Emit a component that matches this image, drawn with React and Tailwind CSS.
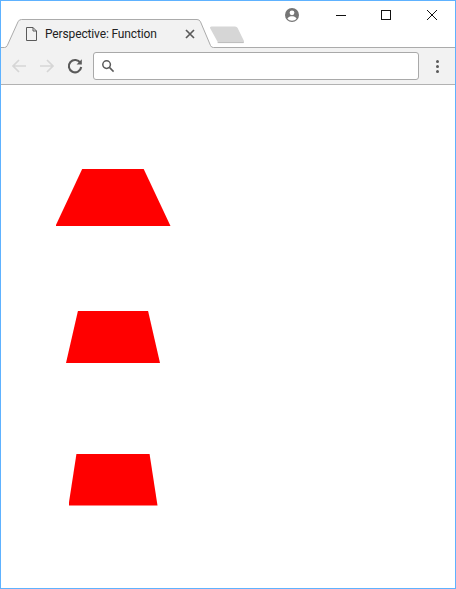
import React from "react";

const TAB_EDGE = "M1 47.5H4.5Q6.5 47.5 7.3 45.5L18 21.8Q19 19.5 21.5 19.5H197Q199.5 19.5 200.5 21.8L210.5 45.5Q211.3 47.5 213.3 47.5H455";

const Tab = () => (
  <svg width="456" height="48" viewBox="0 0 456 48" className="absolute left-0 top-0">
    <path d={TAB_EDGE + "V48H1Z"} fill="#f2f2f2" />
    <path d={TAB_EDGE} fill="none" stroke="#ababab" strokeWidth="1" />
    <path d="M210 28Q209.6 26.5 211.5 26.5H235Q237 26.5 237.6 28L244 41Q244.6 43 243 43H219.5Q218 43 217.4 41.6Z" fill="#d6d6d6" />
    <path d="M217.6 42.6H243.6" stroke="#bdbdbd" strokeWidth="1" />
  </svg>
);

const Trapezoid = ({ className }) => <div className={"bg-[#ff0000] " + className} />;

export default function App() {
  return (
    <div className="relative flex h-[589px] w-[456px] flex-col overflow-hidden border border-[#5eb2ff] bg-white font-['Roboto','Liberation_Sans',sans-serif]">
      <div className="relative h-[47px] shrink-0">
        <div className="absolute -left-px -top-px h-[48px] w-[456px]">
          <Tab />
          <svg width="13" height="16" viewBox="0 0 13 16" className="absolute left-[25px] top-[26px]" fill="none" stroke="#5a5a5a" strokeWidth="1">
            <path d="M1.5 1.5H8L11.5 5V14.5H1.5Z" />
            <path d="M8 1.5V5H11.5" />
          </svg>
          <span className="absolute left-[45px] top-[25px] text-[12px] leading-[18px] tracking-[-0.14px] whitespace-nowrap text-[#222]">Perspective: Function</span>
          <svg width="10" height="10" viewBox="0 0 10 10" className="absolute left-[185px] top-[29px]" stroke="#5a5a5a" strokeWidth="1.7">
            <path d="M1 1L9 9M9 1L1 9" />
          </svg>
          <svg width="16" height="16" viewBox="0 0 16 16" className="absolute left-[284px] top-[7px]">
            <circle cx="8" cy="8" r="7" fill="#757575" />
            <circle cx="8" cy="5.8" r="2.4" fill="#fff" />
            <path d="M3.4 11.6C4.4 9.8 6.2 9.2 8 9.2S11.6 9.8 12.6 11.6C11.5 13 9.9 13.8 8 13.8S4.5 13 3.4 11.6Z" fill="#fff" />
          </svg>
          <svg width="12" height="2" viewBox="0 0 12 2" className="absolute left-[335px] top-[14px]"><path d="M1 1.5H11" stroke="#111" strokeWidth="1" /></svg>
          <svg width="12" height="12" viewBox="0 0 12 12" className="absolute left-[380px] top-[9px]" fill="none"><rect x="1.5" y="1.5" width="9" height="9" stroke="#111" /></svg>
          <svg width="12" height="12" viewBox="0 0 12 12" className="absolute left-[426px] top-[9px]" fill="none"><path d="M1 1L11 11M11 1L1 11" stroke="#111" /></svg>
        </div>
      </div>
      <div className="relative flex h-[37px] shrink-0 items-center border-b border-[#b2b2b2] bg-[#f2f2f2] pl-[8px] pr-[7px]">
        <button className="flex h-[20px] w-[20px] items-center justify-center">
          <svg width="18" height="18" viewBox="0 0 18 18" fill="none" stroke="#d6d6d6" strokeWidth="1.7"><path d="M16 9H3M9 3L3 9L9 15" /></svg>
        </button>
        <button className="ml-[8px] flex h-[20px] w-[20px] items-center justify-center">
          <svg width="18" height="18" viewBox="0 0 18 18" fill="none" stroke="#d6d6d6" strokeWidth="1.7"><path d="M2 9H15M9 3L15 9L9 15" /></svg>
        </button>
        <button className="ml-[8px] flex h-[20px] w-[20px] items-center justify-center">
          <svg width="18" height="18" viewBox="0 0 18 18" fill="none" stroke="#5a5a5a" strokeWidth="2.1"><path d="M14.4 6A6.2 6.2 0 1 0 15.2 10" /><path d="M15.8 2.2V7.4H10.6Z" fill="#5a5a5a" stroke="none" /></svg>
        </button>
        <div className="ml-[8px] flex h-[28px] w-[326px] items-center rounded-[3px] border border-[#a9a9a9] bg-white pl-[7px]">
          <svg width="14" height="14" viewBox="0 0 14 14" fill="none" stroke="#5a5a5a" strokeWidth="1.5"><circle cx="5.6" cy="5.6" r="3.8" /><path d="M8.4 8.4L12.6 12.6" /></svg>
        </div>
        <div className="ml-[17px] flex flex-col gap-[2px]">
          <span className="h-[3px] w-[3px] rounded-full bg-[#5a5a5a]" />
          <span className="h-[3px] w-[3px] rounded-full bg-[#5a5a5a]" />
          <span className="h-[3px] w-[3px] rounded-full bg-[#5a5a5a]" />
        </div>
      </div>
      <div className="flex-1 bg-white">
        <Trapezoid className="ml-[54.5px] mt-[84px] h-[57px] w-[115px] [clip-path:polygon(23.2%_0,76.7%_0,100%_100%,0_100%)]" />
        <Trapezoid className="ml-[65px] mt-[84.5px] h-[52.5px] w-[94px] [clip-path:polygon(12.8%_0,87.2%_0,100%_100%,0_100%)]" />
        <Trapezoid className="ml-[67.5px] mt-[90.5px] h-[52px] w-[89px] [clip-path:polygon(9%_0,91%_0,100%_100%,0_100%)]" />
      </div>
    </div>
  );
}
